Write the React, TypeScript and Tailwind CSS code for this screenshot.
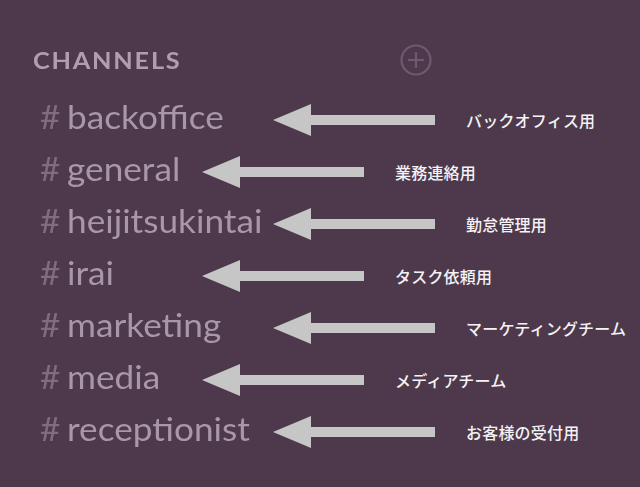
const channels = [
  { name: "backoffice", note: "バックオフィス用", nameW: "w-[233px]" },
  { name: "general", note: "業務連絡用", nameW: "w-[162px]" },
  { name: "heijitsukintai", note: "勤怠管理用", nameW: "w-[233px]" },
  { name: "irai", note: "タスク依頼用", nameW: "w-[162px]" },
  { name: "marketing", note: "マーケティングチーム", nameW: "w-[233px]" },
  { name: "media", note: "メディアチーム", nameW: "w-[162px]" },
  { name: "receptionist", note: "お客様の受付用", nameW: "w-[233px]" },
];

function Arrow() {
  return (
    <svg width="162" height="32" viewBox="0 0 162 32" className="shrink-0">
      <path d="M0 16 L38 0 L38 11 L162 11 L162 21 L38 21 L38 32 Z" fill="#c6c6c6" />
    </svg>
  );
}

export default function App() {
  return (
    <div className="h-[487px] w-[640px] overflow-hidden bg-[#4d394b] font-['Lato','Noto_Sans',sans-serif]">
      <div className="flex items-center pl-[33px] pt-[43px]">
        <span className="w-[366px] origin-left scale-x-[1.1] text-[23px] font-bold leading-[32px] tracking-[1.6px] text-[#b09eae] blur-[0.4px]">
          CHANNELS
        </span>
        <svg width="34" height="34" viewBox="0 0 34 34" className="blur-[0.5px]">
          <circle cx="17" cy="17" r="14.5" fill="none" stroke="#70586e" strokeWidth="2.2" />
          <path d="M17 9 V25 M9 17 H25" stroke="#70586e" strokeWidth="2.2" />
        </svg>
      </div>
      <div className="mt-[14px] flex flex-col pl-[40px]">
        {channels.map((c) => (
          <div key={c.name} className="flex h-[52px] items-center">
            <div className={`${c.nameW} shrink-0 whitespace-nowrap`}>
              <div className="origin-left scale-x-[1.1] text-[32px] leading-[52px] blur-[0.5px]">
                <span className="text-[#7f6c7e]">#</span>
                <span className="ml-[6px] text-[#a897a7]">{c.name}</span>
              </div>
            </div>
            <div className="flex items-center pt-[5px]">
              <Arrow />
              <span className="ml-[31px] whitespace-nowrap font-['Noto_Sans_CJK_JP','Noto_Sans',sans-serif] text-[16px] font-medium tracking-[0.2px] text-[#f4f2f4]">
                {c.note}
              </span>
            </div>
          </div>
        ))}
      </div>
    </div>
  );
}
